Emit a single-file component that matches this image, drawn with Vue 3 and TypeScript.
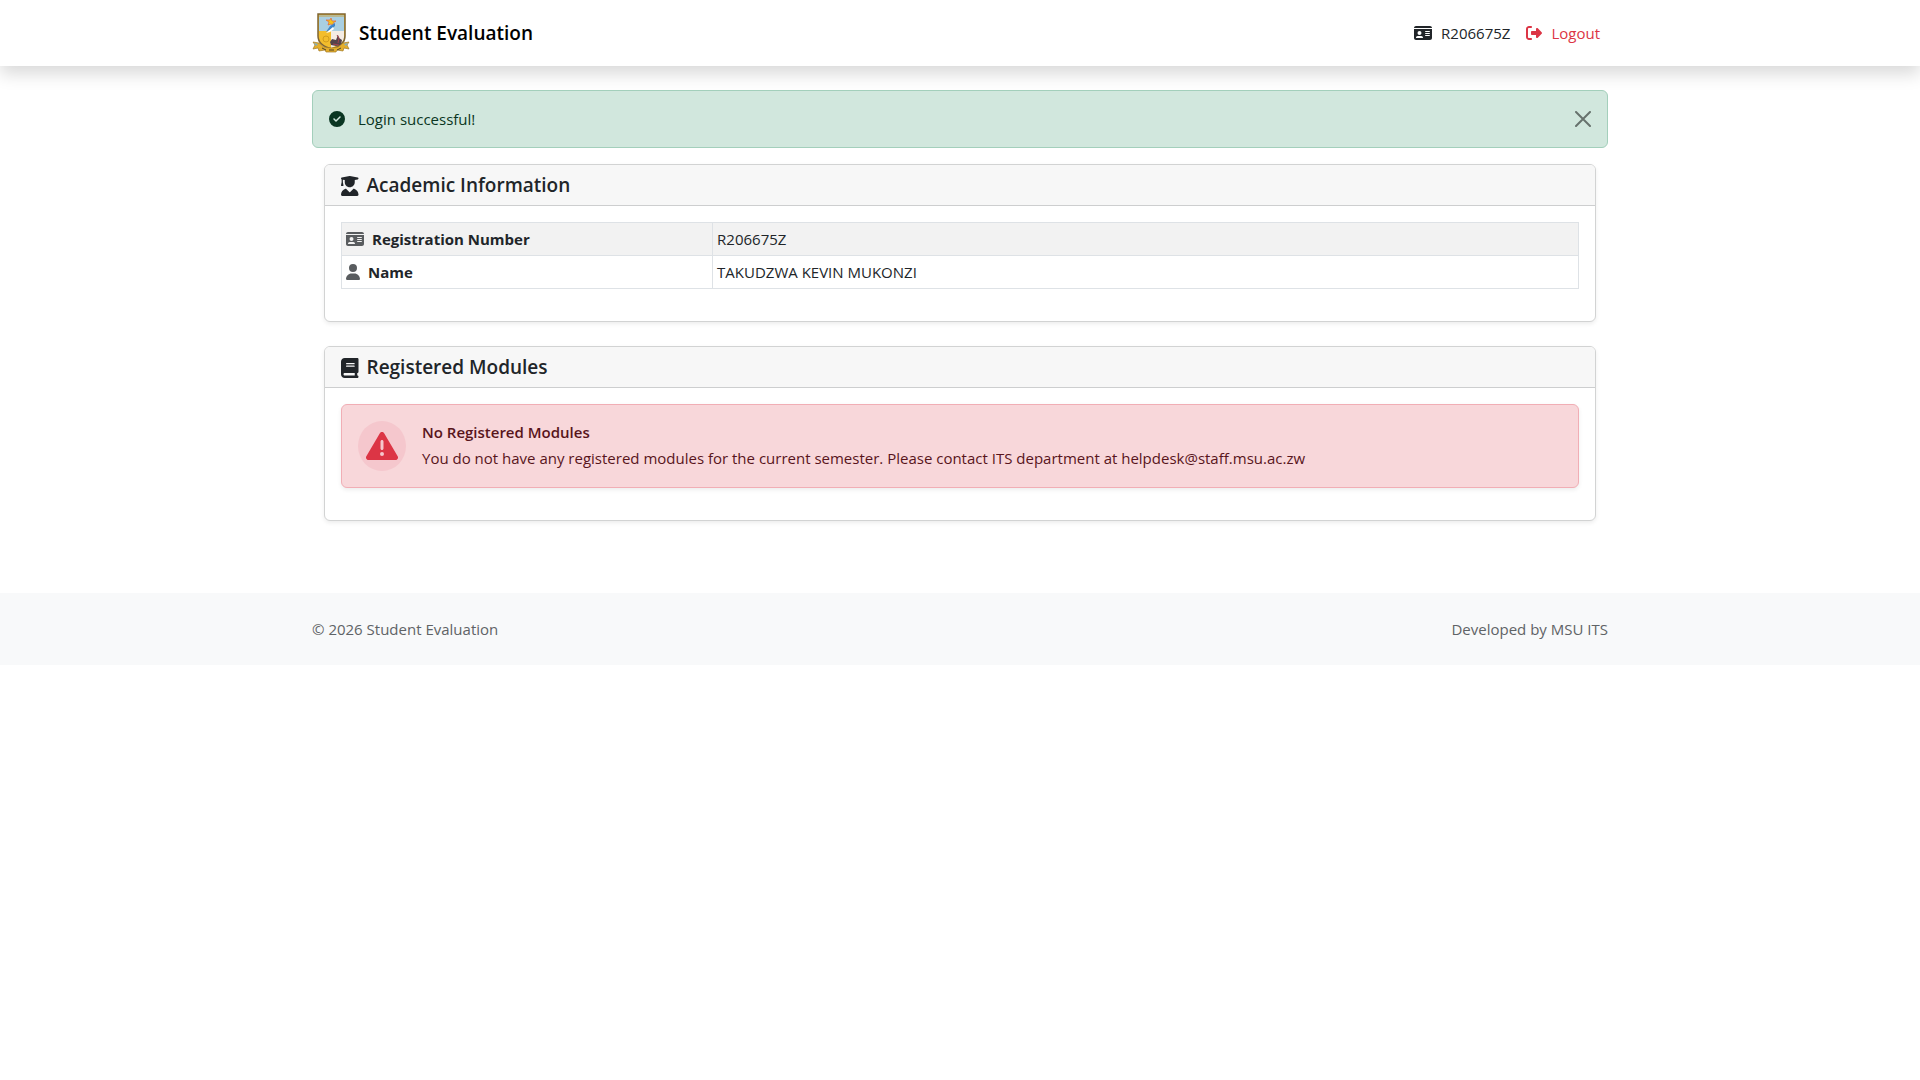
<script setup lang="ts">
import { ref } from 'vue'

interface Icon {
  width: number
  path: string
}

const icons: Record<string, Icon> = {
  idCard: {
    width: 576,
    path: 'M0 96l576 0c0-35.3-28.7-64-64-64L64 32C28.7 32 0 60.7 0 96zm0 32L0 416c0 35.3 28.7 64 64 64l448 0c35.3 0 64-28.7 64-64l0-288L0 128zM64 405.3c0-29.5 23.9-53.3 53.3-53.3l117.3 0c29.5 0 53.3 23.9 53.3 53.3c0 5.9-4.8 10.7-10.7 10.7L74.7 416c-5.9 0-10.7-4.8-10.7-10.7zM176 192a64 64 0 1 1 0 128 64 64 0 1 1 0-128zm176 16c0-8.8 7.2-16 16-16l128 0c8.8 0 16 7.2 16 16s-7.2 16-16 16l-128 0c-8.8 0-16-7.2-16-16zm0 64c0-8.8 7.2-16 16-16l128 0c8.8 0 16 7.2 16 16s-7.2 16-16 16l-128 0c-8.8 0-16-7.2-16-16zm0 64c0-8.8 7.2-16 16-16l128 0c8.8 0 16 7.2 16 16s-7.2 16-16 16l-128 0c-8.8 0-16-7.2-16-16z',
  },
  logout: {
    width: 512,
    path: 'M377.9 105.9L500.7 228.7c7.2 7.2 11.3 17.1 11.3 27.3s-4.1 20.1-11.3 27.3L377.9 406.1c-6.4 6.4-15 9.9-24 9.9c-18.7 0-33.9-15.2-33.9-33.9l0-62.1-128 0c-17.7 0-32-14.3-32-32l0-64c0-17.7 14.3-32 32-32l128 0 0-62.1c0-18.7 15.2-33.9 33.9-33.9c9 0 17.6 3.6 24 9.9zM160 96L96 96c-17.7 0-32 14.3-32 32l0 256c0 17.7 14.3 32 32 32l64 0c17.7 0 32 14.3 32 32s-14.3 32-32 32l-64 0c-53 0-96-43-96-96L0 128C0 75 43 32 96 32l64 0c17.7 0 32 14.3 32 32s-14.3 32-32 32z',
  },
  check: {
    width: 512,
    path: 'M256 512A256 256 0 1 0 256 0a256 256 0 1 0 0 512zM369 209L241 337c-9.4 9.4-24.6 9.4-33.9 0l-64-64c-9.4-9.4-9.4-24.6 0-33.9s24.6-9.4 33.9 0l47 47L335 175c9.4-9.4 24.6-9.4 33.9 0s9.4 24.6 0 33.9z',
  },
  graduate: {
    width: 448,
    path: 'M219.3 .5c3.1-.6 6.3-.6 9.4 0l200 40C439.9 42.7 448 52.6 448 64s-8.1 21.3-19.3 23.5L352 102.9V160c0 70.7-57.3 128-128 128s-128-57.3-128-128V102.9L48 93.3v65.1l15.7 78.4c.9 4.7-.3 9.6-3.3 13.3s-7.6 5.9-12.4 5.9H16c-4.8 0-9.3-2.1-12.4-5.9s-4.3-8.6-3.3-13.3L16 158.4V86.6C6.5 83.3 0 74.3 0 64C0 52.6 8.1 42.7 19.3 40.5l200-40zM111.9 327.7c10.5-3.4 21.8 .4 29.4 8.5l71 75.5c6.3 6.7 17 6.7 23.3 0l71-75.5c7.6-8.1 18.9-11.9 29.4-8.5C401 348.6 448 409.4 448 481.3c0 17-13.8 30.7-30.7 30.7H30.7C13.8 512 0 498.2 0 481.3c0-71.9 47-132.7 111.9-153.6z',
  },
  user: {
    width: 448,
    path: 'M224 256A128 128 0 1 0 224 0a128 128 0 1 0 0 256zm-45.7 48C79.8 304 0 383.8 0 482.3C0 498.7 13.3 512 29.7 512l388.6 0c16.4 0 29.7-13.3 29.7-29.7C448 383.8 368.2 304 269.7 304l-91.4 0z',
  },
  book: {
    width: 448,
    path: 'M96 0C43 0 0 43 0 96L0 416c0 53 43 96 96 96l288 0 32 0c17.7 0 32-14.3 32-32s-14.3-32-32-32l0-64c17.7 0 32-14.3 32-32l0-320c0-17.7-14.3-32-32-32L384 0 96 0zm0 384l256 0 0 64L96 448c-17.7 0-32-14.3-32-32s14.3-32 32-32zm32-240c0-8.8 7.2-16 16-16l192 0c8.8 0 16 7.2 16 16s-7.2 16-16 16l-192 0c-8.8 0-16-7.2-16-16zm16 48l192 0c8.8 0 16 7.2 16 16s-7.2 16-16 16l-192 0c-8.8 0-16-7.2-16-16s7.2-16 16-16z',
  },
  warning: {
    width: 512,
    path: 'M256 32c14.2 0 27.3 7.5 34.5 19.8l216 368c7.3 12.4 7.3 27.7 .2 40.1S486.3 480 472 480L40 480c-14.3 0-27.6-7.7-34.7-20.1s-7-27.8 .2-40.1l216-368C228.7 39.5 241.8 32 256 32zm0 128c-13.3 0-24 10.7-24 24l0 112c0 13.3 10.7 24 24 24s24-10.7 24-24l0-112c0-13.3-10.7-24-24-24zm32 224a32 32 0 1 0 -64 0 32 32 0 1 0 64 0z',
  },
}

const box = (name: string): string => `0 0 ${icons[name].width} 512`

const regNumber = 'R206675Z'
const details = [
  { icon: 'idCard', label: 'Registration Number', value: regNumber },
  { icon: 'user', label: 'Name', value: 'TAKUDZWA KEVIN MUKONZI' },
]

const showAlert = ref(true)
</script>

<template>
  <header class="navbar">
    <div class="container navbar-inner">
      <a class="brand" href="#">
        <svg class="crest" viewBox="0 0 38 40" aria-hidden="true">
          <path d="M6 1h27v22c0 7-6 11-13 13C12 34 6 30 6 23z" fill="#f2bd2c" />
          <path d="M7 2h25v16H7z" fill="#a9cfe2" />
          <path d="M19 18h13v7c0 4-5 7-13 10z" fill="#f4ece4" />
          <path d="M6 1h27v22c0 7-6 11-13 13C12 34 6 30 6 23z" fill="none" stroke="#7d6433" stroke-width="1.500" />
          <path d="M7 3h25" stroke="#c8a245" />
          <path d="M19 5l1 3 4 0-3 2 1 3-3-2-3 1 1-3-3-2h4z" fill="#f5c518" stroke="#e2653f" stroke-width=".7" />
          <path d="M23 10l0 3-5 4-4 2 4-6z" fill="#3f86c9" />
          <path d="M21 14l1 2-4 3-4 1z" fill="#fff" />
          <path d="M18 29l2-3 4 1 2-5 1 3 3 2-1 5-5 1-5-1z" fill="#54444a" />
          <path d="M25 22l2 3-1 5M21 31l6 1" stroke="#a5404e" fill="none" />
          <circle cx="14" cy="26" r="3" fill="none" stroke="#d29d1c" />
          <path d="M1 29l6 1 5 4 7 1 7-1 5-4 6-1-2 3 2 4-5-1-1 3-6-1-1 2h-10l-1-2-6 1-1-3-5 1 2-4z" fill="#e4ae2b" stroke="#a17a27" stroke-width=".7" />
          <path d="M2 30l4 1-2 2zM36 30l-4 1 2 2z" fill="#7eaec6" />
          <path d="M10 35l4 2M17 37h5M25 37l4-2" stroke="#4b4029" stroke-width="1" />
        </svg>
        <span>Student Evaluation</span>
      </a>
      <nav class="nav-links">
        <span class="nav-item">
          <svg class="icon" :viewBox="box('idCard')" aria-hidden="true"><path :d="icons.idCard.path" /></svg>
          {{ regNumber }}
        </span>
        <a class="nav-item logout" href="#">
          <svg class="icon" :viewBox="box('logout')" aria-hidden="true"><path :d="icons.logout.path" /></svg>
          Logout
        </a>
      </nav>
    </div>
  </header>

  <main class="container">
    <div v-if="showAlert" class="alert alert-success" role="alert">
      <svg class="icon" :viewBox="box('check')" aria-hidden="true"><path :d="icons.check.path" /></svg>
      <span>Login successful!</span>
      <button type="button" class="close" aria-label="Close" @click="showAlert = false">
        <svg viewBox="0 0 16 16" aria-hidden="true">
          <path d="M1 1l14 14M15 1L1 15" fill="none" stroke="currentColor" stroke-width="2" stroke-linecap="round" />
        </svg>
      </button>
    </div>

    <div class="cards">
      <section class="card">
        <h5 class="card-header">
          <svg class="icon" :viewBox="box('graduate')" aria-hidden="true"><path :d="icons.graduate.path" /></svg>
          Academic Information
        </h5>
        <div class="card-body">
          <table class="details">
            <tbody>
              <tr v-for="row in details" :key="row.label">
                <th scope="row">
                  <div class="label">
                    <svg class="icon" :viewBox="box(row.icon)" aria-hidden="true"><path :d="icons[row.icon].path" /></svg>
                    {{ row.label }}
                  </div>
                </th>
                <td>{{ row.value }}</td>
              </tr>
            </tbody>
          </table>
        </div>
      </section>

      <section class="card">
        <h5 class="card-header">
          <svg class="icon" :viewBox="box('book')" aria-hidden="true"><path :d="icons.book.path" /></svg>
          Registered Modules
        </h5>
        <div class="card-body">
          <div class="alert alert-danger" role="alert">
            <div class="badge">
              <svg class="icon" :viewBox="box('warning')" aria-hidden="true"><path :d="icons.warning.path" /></svg>
            </div>
            <div>
              <h6>No Registered Modules</h6>
              <p>You do not have any registered modules for the current semester. Please contact ITS department at helpdesk@staff.msu.ac.zw</p>
            </div>
          </div>
        </div>
      </section>
    </div>
  </main>

  <footer class="footer">
    <div class="container footer-inner">
      <span>© 2026 Student Evaluation</span>
      <span>Developed by MSU ITS</span>
    </div>
  </footer>
</template>

<style>
body {
  margin: 0;
  background: #fff;
  color: #212529;
  font: 400 15px/24px "Open Sans", "Noto Sans", sans-serif;
}
</style>

<style scoped>
* {
  box-sizing: border-box;
}

.container {
  max-width: 1320px;
  margin: 0 auto;
  padding: 0 12px;
}

.icon {
  display: block;
  flex: none;
  height: 16px;
  fill: currentColor;
}

.navbar {
  padding: 13px 0;
  background: #fff;
  box-shadow: 0 8px 16px rgba(0, 0, 0, 0.15);
}

.navbar-inner,
.footer-inner {
  display: flex;
  align-items: center;
  justify-content: space-between;
}

.brand {
  display: flex;
  align-items: center;
  gap: 9px;
  color: #000;
  font-size: 19px;
  font-weight: 600;
  line-height: 26px;
  text-decoration: none;
}

.crest {
  width: 38px;
  height: 40px;
}

.nav-links {
  display: flex;
  gap: 16px;
  padding-right: 8px;
}

.nav-item {
  display: flex;
  align-items: center;
  gap: 9px;
  text-decoration: none;
}

.logout {
  color: #dc3545;
}

.alert {
  display: flex;
  align-items: center;
  padding: 16px;
  margin-bottom: 16px;
  border: 1px solid;
  border-radius: 6px;
}

.alert-success {
  gap: 13px;
  margin-top: 24px;
  background: #d1e7dd;
  border-color: #a3cfbb;
  color: #0a3622;
}

.close {
  width: 16px;
  height: 16px;
  margin-left: auto;
  padding: 0;
  border: 0;
  background: none;
  color: #000;
  opacity: 0.5;
  cursor: pointer;
}

.close svg {
  display: block;
}

.cards {
  padding: 0 12px;
}

.card {
  margin-bottom: 24px;
  background: #fff;
  border: 1px solid #d2d3d3;
  border-radius: 6px;
  box-shadow: 0 2px 4px rgba(0, 0, 0, 0.075);
}

.card-header {
  display: flex;
  align-items: center;
  gap: 8px;
  margin: 0;
  padding: 8px 16px 7px;
  background: #f7f7f7;
  border-bottom: 1px solid #cdcecf;
  border-radius: 5px 5px 0 0;
  font-size: 19px;
  font-weight: 600;
  line-height: 25px;
}

.card-header .icon {
  height: 20px;
}

.card-body {
  padding: 16px;
}

.details {
  width: 100%;
  margin-bottom: 16px;
  border-collapse: collapse;
}

.details th,
.details td {
  padding: 4px;
  border: 1px solid #dee2e6;
  text-align: left;
}

.details th {
  width: 30%;
  font-weight: 700;
}

.details tr:nth-child(odd) {
  background: #f2f2f2;
}

.label {
  display: flex;
  align-items: center;
  gap: 8px;
}

.label .icon {
  fill: #595c5f;
}

.alert-danger {
  gap: 16px;
  background: #f8d7da;
  border-color: #f1aeb5;
  color: #58151c;
  box-shadow: 0 2px 4px rgba(0, 0, 0, 0.075);
}

.badge {
  display: flex;
  flex: none;
  align-items: center;
  justify-content: center;
  width: 48px;
  height: 50px;
  border-radius: 50%;
  background: #f5c7cd;
  color: #dc3545;
}

.badge .icon {
  height: 32px;
}

h6 {
  margin: 0 0 4px;
  font-size: 15px;
  font-weight: 600;
  line-height: 19px;
}

p {
  margin: 0;
}

.footer {
  margin-top: 72px;
  padding: 24px 0;
  background: #f8f9fa;
  color: #5f6366;
}
</style>
